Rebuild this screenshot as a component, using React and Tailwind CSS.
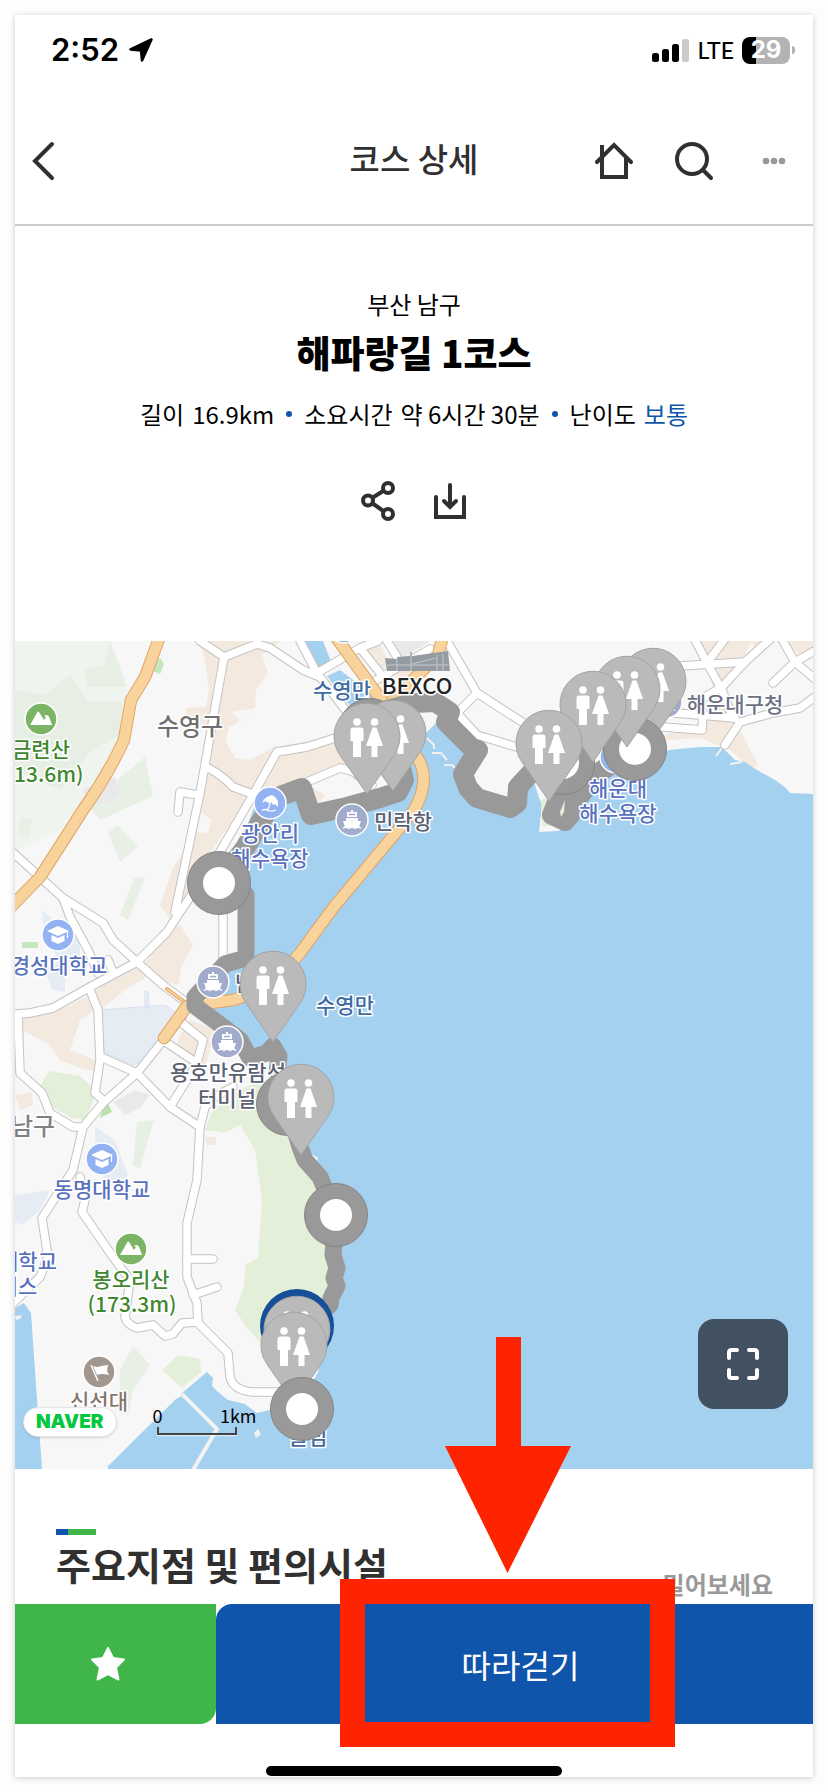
import { useState } from "react";

const roads = [
  "M200 641 L224 657 L257 644 L270 648 L303 670 L320 677 L347 712",
  "M224 657 L200 793 L175 912",
  "M208 768 Q222 775 233 787 L250 793",
  "M335 738 L307 747 L277 752 L250 800 L217 857 L180 912 L167 932 L137 962",
  "M198 795 L180 792 L178 812",
  "M10 850 L63 898 L103 923 L113 940 L137 962 L163 985 L187 1003",
  "M63 898 L70 917 L88 950 L98 973 M108 960 L113 972",
  "M137 962 L90 987 L53 1008 L30 1013 L15 1014",
  "M90 990 L98 1010 L100 1060 L95 1093 L103 1100",
  "M18 1014 L20 1073 L42 1093 L50 1113 L73 1127 L83 1127",
  "M182 1017 L137 1073 L103 1103 L83 1127 L73 1170 L42 1218 L48 1257 L40 1277 L10 1306",
  "M103 1058 L137 1073 L170 1107 L200 1127 L197 1180 L187 1223 L187 1277 L197 1303 L198 1323 L228 1353 L230 1377 Q233 1390 252 1392 L285 1392",
  "M198 1322 L182 1323 L173 1334 L165 1336 L153 1325 L137 1328 Q127 1325 125 1317 L130 1280 L113 1257 L82 1212 L85 1200 L80 1177",
  "M187 1259 L213 1259",
  "M193 1295 L217 1287",
  "M200 1127 L205 1107 L213 1098 L233 1087",
  "M170 1107 L193 1070",
  "M182 1023 L203 1040 L197 1063 L167 1043",
  "M223 905 L223 975",
  "M447 641 L477 693 L530 727",
  "M477 693 L457 713 L477 735 L520 748",
  "M300 641 L317 673 L360 648 L378 641",
  "M360 648 L380 673",
  "M373 682 L430 649",
  "M387 641 L399 660",
  "M300 785 L340 768 L352 771 L372 785",
  "M693 636 L707 663 L722 690 L733 718",
  "M727 636 L707 663",
  "M680 666 L745 662 L778 632",
  "M745 662 L722 687 L700 700",
  "M780 636 L795 662 L816 680",
  "M773 683 L795 662 L816 650",
  "M816 696 L800 708 L773 713 L740 722 L725 745",
  "M675 713 L735 718",
  "M703 712 L702 730 L663 727",
];

const highways = [
  "M160 636 L145 677 L131 700 L124 740 Q108 775 83 810 L40 877 L10 908",
  "M335 636 L385 705 L417 757 Q432 780 413 812 L333 908 L300 953 L270 988 L233 1000 L187 1006 L164 1038",
  "M443 636 L438 655 L393 700",
];

const route =
  "M219 882 L245 848 L275 798 L302 788 L311 815 L347 807 L380 798 L398 792 L404 780 L395 745 L370 715 L413 703 L435 702 L450 712 L446 722 L472 748 L478 750 L463 774 L468 788 L477 798 L510 808 L517 803 L518 787 L530 774 L549 770 L568 770 L558 800 L552 815 L565 821 L570 815 L577 800 L595 775 L635 749";

const routeSouth =
  "M219 882 L246 895 L246 958 L225 964 L195 997 L195 1006 L222 1026 L240 1040 L250 1058 L267 1053 L273 1046 L279 1056 L277 1073 L287 1104 L300 1147 L305 1160 L320 1177 L336 1215 L333 1255 L337 1268 L334 1278 L337 1286 L331 1298 L330 1305 L297 1330";

const labels = [
  { text: "수영구", x: 190, y: 735, size: 24, color: "#6f6f6f" },
  { text: "금련산", x: 41, y: 757, color: "#3f8730" },
  { text: "(413.6m)", x: 39, y: 782, color: "#3f8730" },
  { text: "수영만", x: 342, y: 698, color: "#3f6ba3" },
  { text: "BEXCO", x: 417, y: 694, size: 22, color: "#222222" },
  { text: "광안리", x: 270, y: 841, color: "#5a72bd" },
  { text: "해수욕장", x: 270, y: 866, color: "#5a72bd" },
  { text: "민락항", x: 403, y: 829, color: "#5b6170" },
  { text: "해운대구청", x: 735, y: 712, color: "#6b7186" },
  { text: "해운대", x: 618, y: 796, color: "#5a72bd" },
  { text: "해수욕장", x: 618, y: 821, color: "#5a72bd" },
  { text: "경성대학교", x: 59, y: 973, color: "#5a72bd" },
  { text: "남천항", x: 264, y: 991, color: "#5b6170" },
  { text: "수영만", x: 345, y: 1013, color: "#3f6ba3" },
  { text: "용호만유람선", x: 228, y: 1080, color: "#5b6170" },
  { text: "터미널", x: 227, y: 1106, color: "#5b6170" },
  { text: "남구", x: 33, y: 1135, size: 24, color: "#808080" },
  { text: "동명대학교", x: 102, y: 1197, color: "#5a72bd" },
  { text: "대학교", x: 28, y: 1269, color: "#5a72bd" },
  { text: "퍼스", x: 18, y: 1294, color: "#5a72bd" },
  { text: "봉오리산", x: 131, y: 1287, color: "#3f8730" },
  { text: "(173.3m)", x: 132, y: 1312, color: "#3f8730" },
  { text: "신선대", x: 99, y: 1409, color: "#85766e" },
  { text: "굴섬", x: 308, y: 1444, color: "#46699a" },
];

function Poi({ x, y, type }) {
  const fills = {
    beach: "#93b2f2",
    school: "#93b2f2",
    port: "#a1abcb",
    mountain: "#7bb464",
    flag: "#a2978e",
  };
  return (
    <g transform={`translate(${x} ${y})`}>
      <circle r="16" fill={fills[type]} stroke="#fff" strokeWidth="1.5" />
      {type === "mountain" && <path d="M-11 6 L-3.5 -7 Q-3 -8 -2 -7 L3 1 L5 -2 L3 -3 Q7 -6 8.500 -1 L11 6 Z" fill="#fff" />}
      {type === "school" && (
        <g fill="#fff">
          <path d="M0 -9 L11 -4 L0 1 L-11 -4 Z" />
          <path d="M-6.500 0 L0 3 L6.500 0 V6 L0 9 L-6.500 6 Z" />
          <path d="M9.500 -4 V3" stroke="#fff" strokeWidth="1.200" />
        </g>
      )}
      {type === "port" && (
        <g fill="#fff">
          <path d="M-1 -10 H1 V-8 H5 V-3 H-5 V-8 H-1 Z" />
          <path d="M-6 -2 H6 V1 L9 1 L7 7 H-7 L-9 1 L-6 1 Z" />
          <path d="M-9 8.500 Q-6 6 -3 8.500 Q0 6 3 8.500 Q6 6 9 8.500" fill="none" stroke="#fff" strokeWidth="1.500" />
          <path d="M-3 -5.500 H3" stroke={fills.port} strokeWidth="1.500" />
        </g>
      )}
      {type === "beach" && (
        <g fill="#fff">
          <path d="M-8 0 Q-6 -6 2 -8 Q9 -5 8 4 L5 1 L3.500 2 L1 -1 L-2 0 L-4 -2 Z" />
          <path d="M1 -3 L-2 7 M-8 7.500 Q-5 5.500 -2 7.500 Q1 9 6 7" stroke="#fff" strokeWidth="1.300" fill="none" />
        </g>
      )}
      {type === "flag" && (
        <g fill="#fff">
          <path d="M-8 -7 L-1 9" stroke="#fff" strokeWidth="1.500" />
          <path d="M-6 -6 Q-1 -4 2 -6 L9 -7 L8 -1 L10 3 Q3 1 -2 3 Z" />
        </g>
      )}
    </g>
  );
}

function Stop({ x, y }) {
  return (
    <g>
      <circle cx={x} cy={y} r="31.500" fill="#999" stroke="#848484" />
      <circle cx={x} cy={y} r="16" fill="#fff" />
    </g>
  );
}

function RestroomPin({ x, y }) {
  return (
    <g transform={`translate(${x} ${y})`}>
      <path d="M0 57 L-27.500 17.500 A33 33 0 1 1 27.500 17.500 Z" fill="#bababa" stroke="#a3a3a3" />
      <g fill="#fff">
        <circle cx="-10" cy="-15" r="3.800" />
        <path d="M-14 -9.500 H-6 Q-3.500 -9.500 -3.500 -7 V4 H-6 V20 H-14 V4 H-16.500 V-7 Q-16.500 -9.500 -14 -9.500 Z" />
        <circle cx="7.500" cy="-15" r="3.800" />
        <path d="M5.500 -9.500 H9.500 L16 9 H10.500 V20 H4.500 V9 H-1 Z" />
      </g>
    </g>
  );
}

function CourseMap() {
  return (
    <svg
      viewBox="15 641 798 828"
      className="block h-auto w-full"
      role="img"
      aria-label="해파랑길 1코스 지도"
      fontFamily='"Noto Sans CJK KR", sans-serif'
    >
      <rect x="15" y="641" width="798" height="828" fill="#f7f7f7" />

      {/* parks and hills */}
      <path d="M15 641 H110 L122 686 L128 690 L120 750 L60 830 L15 850 Z" fill="#f0f4ee" />
      <path d="M15 690 L45 695 L70 675 L88 702 H122 L120 735 L88 753 L75 775 L60 790 L15 770 Z" fill="#e7efe4" />
      <path d="M111 642 L127 687 H88 L84 670 L103 665 Z M145 757 L153 796 L100 820 L88 805 Z M20 817 L32 820 L28 839 L18 836 Z M117 825 L138 846 L120 862 L108 833 Z M134 878 L145 877 L128 920 L120 915 Z M137 1122 L154 1120 L140 1168 L133 1166 Z M120 1370 L133 1346 L150 1365 L133 1390 L128 1415 L119 1412 Z" fill="#e8efe5" />
      <path d="M155 662 L160 658 L164 664 L160 674 L153 671 Z M22 942 H38 V948 H22 Z" fill="#c3e6bb" />
      <path d="M49 1071 L80 1076 L97 1092 L85 1120 L72 1118 L40 1100 L38 1090 Z M162 1370 L178 1355 L200 1359 L201 1372 L182 1388 Z" fill="#e4efd9" />
      <path d="M103 1108 L108 1103 L112 1112 L100 1118 Z" fill="#b9e0ad" />
      <path d="M262 1080 L240 1090 L213 1110 L205 1130 L225 1133 L240 1125 L255 1150 L262 1200 L258 1257 L246 1265 L243 1290 L235 1310 L245 1325 L262 1345 H320 L334 1310 L333 1200 L305 1160 L287 1090 Z" fill="#e4efd9" />

      {/* built-up areas */}
      <g fill="#f3e9df">
        <path d="M200 641 H280 L262 655 L268 672 L256 690 L255 708 L232 712 L240 720 L228 730 L226 742 L235 758 L250 760 L278 745 L270 780 L240 810 L205 860 L175 925 L160 905 L172 870 L196 832 L208 833 L211 820 L196 808 L200 770 L210 730 L186 718 V708 L206 707 L209 690 L205 660 Z" />
        <path d="M160 930 L180 925 L193 945 L182 965 L178 985 L160 980 L145 965 Z" />
        <path d="M85 1000 L115 975 L140 965 L150 975 L125 990 L98 1012 Z" />
        <path d="M18 1020 L60 1010 L90 995 L95 1010 L80 1020 L70 1050 L95 1060 L98 1072 L80 1068 L60 1060 L50 1045 L22 1030 Z" />
        <path d="M190 1020 L215 1030 L205 1070 L175 1050 L180 1035 Z M15 1095 L32 1092 L33 1105 L20 1110 Z M205 1137 H216 V1145 H207 Z" />
        <path d="M272 748 L335 735 L345 765 L300 780 L325 795 L315 808 L300 780 L262 790 Z" />
        <path d="M366 650 L380 643 L390 665 L378 672 Z M385 675 L440 650 L420 680 Z" />
        <path d="M700 641 H752 L722 700 L735 720 L758 765 L750 768 L730 750 L700 738 L640 742 L665 735 L700 725 L715 695 Z M752 641 H773 L755 655 Z M785 641 H813 V648 L800 655 Z" />
      </g>
      <path d="M240 722 L252 716 L245 730 L226 728 Z" fill="#f7f7f7" />

      {/* campuses */}
      <path d="M100 1010 L165 1005 L182 1017 L145 1060 L133 1065 L103 1052 Z M145 991 L148 992 L149 1008 L145 1008 Z" fill="#e5ecf3" stroke="#d8e1ed" />
      <path d="M42 910 L60 925 L80 940 L80 960 L65 965 L65 992 L52 990 L45 970 L60 960 L45 940 Z M95 1127 L115 1140 L128 1175 L118 1190 L95 1170 Z M15 1195 L50 1190 L40 1210 L22 1225 L15 1222 Z" fill="#e5ecf3" />
      <path d="M113 1102 L135 1090 L150 1095 L140 1108 L125 1115 Z M82 790 L115 777 L120 792 L110 802 L90 805 Z M385 641 H430 L400 660 Z" fill="#e9e9ea" />

      {/* sea */}
      <path
        d="M813 794 L790 793 L786 788 L775 780 L757 770 L745 762 L735 760 L728 753 L721 747 L700 747 L669 750 L640 760 L605 775 L592 790 L585 808 L574 824 L558 831 L539 832 L542 805 L538 795 L535 785 L527 775 L518 787 L517 803 L510 810 L473 797 L462 773 L478 750 L470 748 L437 722 L425 734 L410 715 L375 695 L353 680 L340 670 L327 676 L345 700 L390 750 L400 775 L398 793 L347 807 L310 817 L301 788 L278 795 L255 805 L240 845 L247 880 L247 958 L225 965 L197 997 L195 1005 L240 1040 L255 1056 L268 1040 L275 1045 L281 1060 L290 1104 L305 1150 L318 1158 L314 1170 L337 1200 L336 1290 L332 1312 L318 1372 L300 1405 L282 1412 L270 1410 L257 1413 L245 1404 L228 1400 L218 1392 L212 1386 L213 1378 L207 1372 L182 1393 L180 1397 L176 1399 L108 1466 V1469 H813 Z"
        fill="#a5d1f0"
      />
      <path d="M305 641 H323 L333 667 L319 672 Z M15 1308 L24 1303 L31 1313 L36 1385 L42 1469 H15 Z" fill="#a5d1f0" />
      <path d="M182 1394 L217 1429 L193 1470" fill="none" stroke="#f2f2f0" strokeWidth="4" />
      <path d="M427 738 L434 745 L434 749 M432 753 H441 L447 760 M444 765 H452 L457 770 M716 756 L722 748 M730 764 L742 762" fill="none" stroke="#f0f0ee" strokeWidth="2" />
      <path d="M254 1433 L258 1429 L261 1434 L256 1438 Z M15 1316 L22 1315 L20 1319 L16 1320 Z" fill="#f2f2f0" />
      <path d="M541 800 L550 797 L550 826 L542 826 Z" fill="#e4efd9" />

      {/* roads */}
      <g fill="none" strokeLinejoin="round" strokeLinecap="round">
        {roads.map((d) => (
          <path key={d} d={d} stroke="#c3c3c3" strokeWidth="9.500" />
        ))}
        {roads.map((d) => (
          <path key={d} d={d} stroke="#fff" strokeWidth="7.500" />
        ))}
        <path d="M167 989 L190 1006" stroke="#dfa164" strokeWidth="4" />
        <path d="M167 989 L190 1006" stroke="#f8d39b" strokeWidth="2" />
        {highways.map((d) => (
          <path key={d} d={d} stroke="#e0a468" strokeWidth="12.500" />
        ))}
        {highways.map((d) => (
          <path key={d} d={d} stroke="#f8d39b" strokeWidth="10.500" />
        ))}
      </g>

      {/* course line */}
      <g fill="none" stroke="#999" strokeWidth="20" strokeLinejoin="round" strokeLinecap="round">
        <path d={route} />
        <path d={routeSouth} strokeWidth="17" />
      </g>
      <path d="M560 812 L565 800 L564 812 L561 817 Z" fill="#e4efd9" />

      {/* convention center */}
      <path d="M385 658 L397 659 V657 L410 656 V652 H412 V656 L448 651 L450 671 H387 Z" fill="#949ba3" />
      <path d="M387 665 H448 M397 659 V671 M411 652 V671 M437 655 V671 M443 654 V671 M412 664 L436 658" stroke="#c5c9cd" strokeWidth="1" fill="none" />

      <Poi x={41} y={719} type="mountain" />
      <Poi x={131} y={1249} type="mountain" />
      <Poi x={270} y={803} type="beach" />
      <Poi x={616} y={757} type="beach" />
      <Poi x={344} y={627} type="school" />
      <Poi x={58} y={935} type="school" />
      <Poi x={102} y={1159} type="school" />
      <Poi x={352} y={820} type="port" />
      <Poi x={213} y={982} type="port" />
      <Poi x={227} y={1042} type="port" />
      <Poi x={666} y={702} type="port" />
      <Poi x={99} y={1372} type="flag" />

      <g textAnchor="middle" fontWeight="500" stroke="#fff" strokeWidth="3" strokeLinejoin="round" paintOrder="stroke">
        {labels.map((l) => (
          <text key={`${l.text}-${l.y}`} x={l.x} y={l.y} fontSize={l.size || 21} fill={l.color}>
            {l.text}
          </text>
        ))}
      </g>

      {/* stops and restrooms, back to front */}
      <Stop x={370} y={730} />
      <RestroomPin x={393} y={734} />
      <RestroomPin x={367} y={737} />
      <RestroomPin x={653} y={682} />
      <Stop x={635} y={749} />
      <RestroomPin x={627} y={690} />
      <Stop x={563} y={763} />
      <RestroomPin x={593} y={705} />
      <RestroomPin x={549} y={744} />
      <Stop x={219} y={883} />
      <RestroomPin x={273} y={985} />
      <Stop x={288} y={1104} />
      <RestroomPin x={301} y={1098} />
      <Stop x={336} y={1215} />
      <circle cx="297" cy="1326" r="37" fill="#154f98" />
      <RestroomPin x={297} y={1330} />
      <RestroomPin x={294} y={1346} />
      <Stop x={302} y={1409} />
    </svg>
  );
}

function StatusBar() {
  return (
    <div className="flex h-[70px] items-center justify-between pr-[18px] pl-9 text-black">
      <div className="flex items-center gap-2.5">
        <span className="font-[Inter,sans-serif] text-[31px] leading-8 font-semibold">2:52</span>
        <svg viewBox="0 0 24 24" className="size-6">
          <path d="M22.500 1.500 L13 22.500 L12 12.500 L1.500 11.500 Z" fill="#000" stroke="#000" strokeWidth="2.500" strokeLinejoin="round" />
        </svg>
      </div>
      <div className="flex items-center gap-2">
        <svg viewBox="0 0 37 23" className="h-[23px] w-[37px]">
          <rect x="0" y="14" width="7" height="9" rx="2.500" />
          <rect x="10" y="10" width="7" height="13" rx="2.500" />
          <rect x="20" y="5" width="7" height="18" rx="2.500" />
          <rect x="30" y="0" width="7" height="23" rx="2.500" fill="#cbcbcb" />
        </svg>
        <span className="font-[Lato,sans-serif] text-[23px] leading-7 font-medium">LTE</span>
        <div className="flex items-center gap-0.5">
          <div className="flex h-[27px] w-12 items-center justify-center rounded-lg bg-linear-to-r from-black from-30% to-[#b3b3b3] to-30% font-[Inter,sans-serif] text-2xl font-bold text-white">
            29
          </div>
          <div className="h-2 w-[3px] rounded-r-full bg-[#b3b3b3]" />
        </div>
      </div>
    </div>
  );
}

function Header() {
  return (
    <header className="grid h-[141px] grid-cols-[1fr_auto_1fr] items-center border-b-2 border-[#cbcbcb] px-4 pt-3 text-[#303030]">
      <button type="button" aria-label="뒤로" className="justify-self-start">
        <svg viewBox="0 0 24 40" className="h-10 w-6" fill="none" stroke="currentColor" strokeWidth="4" strokeLinecap="round">
          <path d="M21 3 L4 20 L21 37" strokeLinejoin="miter" />
        </svg>
      </button>
      <h1 className="pb-1.5 text-[33px] leading-10 font-medium">코스 상세</h1>
      <div className="flex items-center gap-10 justify-self-end pr-[11px]">
        <button type="button" aria-label="홈">
          <svg viewBox="0 0 40 40" className="size-10" fill="none" stroke="currentColor" strokeWidth="4" strokeLinecap="round">
            <path d="M3 21 L20 4 L37 21" />
            <path d="M8 17 V36 H32 V17 M8 4 V17" strokeLinecap="butt" />
          </svg>
        </button>
        <button type="button" aria-label="검색">
          <svg viewBox="0 0 40 40" className="size-10" fill="none" stroke="currentColor" strokeWidth="4" strokeLinecap="round">
            <circle cx="18" cy="18" r="15" />
            <path d="M29 29 L37 37" />
          </svg>
        </button>
        <button type="button" aria-label="더보기" className="pl-2">
          <svg viewBox="0 0 24 8" className="h-2 w-6" fill="#999">
            <circle cx="4" cy="4" r="3.300" />
            <circle cx="12" cy="4" r="3.300" />
            <circle cx="20" cy="4" r="3.300" />
          </svg>
        </button>
      </div>
    </header>
  );
}

export default function App() {
  const [liked, setLiked] = useState(false);

  return (
    <div className="min-h-screen bg-[#fdfdfd] p-[15px] font-['Noto_Sans_CJK_KR',sans-serif]">
      <div className="overflow-hidden bg-white shadow-[0_1px_6px_rgba(0,0,0,0.2)]">
        <StatusBar />
        <Header />

        <main>
          {/* Course summary */}
          <section className="flex flex-col items-center pt-[62px] pb-[120px] text-black">
            <p className="text-2xl leading-8">부산 남구</p>
            <h2 className="mt-2 text-[37px] leading-[48px] font-black">해파랑길 1코스</h2>
            <p className="mt-[22px] flex items-center gap-3 text-2xl leading-8">
              <span className="flex gap-2">
                <span>길이</span>
                <span>16.9km</span>
              </span>
              <span className="size-1.5 rounded-full bg-[#0f55ac]" />
              <span className="flex gap-2">
                <span>소요시간</span>
                <span>약 6시간 30분</span>
              </span>
              <span className="size-1.5 rounded-full bg-[#0f55ac]" />
              <span className="flex gap-2">
                <span>난이도</span>
                <span className="text-[#0f55ac]">보통</span>
              </span>
            </p>
            <div className="mt-[51px] flex gap-8 text-[#303030]">
              <button type="button" aria-label="공유">
                <svg viewBox="0 0 40 40" className="size-10" fill="none" stroke="currentColor" strokeWidth="4">
                  <circle cx="10" cy="19.500" r="5" />
                  <circle cx="30" cy="7" r="5" />
                  <circle cx="30" cy="33" r="5" />
                  <path d="M14 17 L26 9.500 M14 22 L26 30.500" />
                </svg>
              </button>
              <button type="button" aria-label="다운로드">
                <svg viewBox="0 0 40 40" className="size-10" fill="none" stroke="currentColor" strokeWidth="4" strokeLinecap="round">
                  <path d="M6 16 V36 H34 V16" />
                  <path d="M20 4 V24 M14 20 L20 26 L26 20" />
                </svg>
              </button>
            </div>
          </section>

          {/* Map */}
          <section className="relative">
            <CourseMap />
            <div className="absolute bottom-8 left-2 flex items-end gap-9">
              <div className="rounded-full border border-gray-200 bg-white px-3 font-[Inter,sans-serif] text-[19px] leading-7 font-black text-[#03c73c] shadow-sm">
                NAVER
              </div>
              <div className="pb-0.5 text-lg leading-6 text-black">
                <div className="flex w-[104px] justify-between">
                  <span>0</span>
                  <span>1km</span>
                </div>
                <div className="ml-1 h-2 w-20 border-x-2 border-b-2 border-[#444] shadow-[0_1px_1px_rgba(255,255,255,0.6)]" />
              </div>
            </div>
            <button
              type="button"
              aria-label="전체 화면"
              className="absolute right-[25px] bottom-[60px] flex size-[90px] items-center justify-center rounded-2xl bg-[#415161]"
            >
              <svg viewBox="0 0 32 32" className="size-8" fill="none" stroke="#fff" strokeWidth="4" strokeLinecap="round">
                <path d="M2 10 V4.500 Q2 2 4.500 2 H10 M22 2 H27.500 Q30 2 30 4.500 V10 M30 22 V27.500 Q30 30 27.500 30 H22 M10 30 H4.500 Q2 30 2 27.500 V22" />
              </svg>
            </button>
          </section>

          {/* Points of interest */}
          <section className="flex items-end justify-between pt-[60px] pr-10 pb-1.5 pl-[41px]">
            <div className="mb-3">
              <div className="flex h-1.5 w-10">
                <span className="w-3 bg-[#0f55ac]" />
                <span className="flex-1 bg-[#3fb54a]" />
              </div>
              <h3 className="mt-[7px] text-[38px] leading-[44px] font-bold text-[#303030]">주요지점 및 편의시설</h3>
            </div>
            <p className="text-2xl leading-7 font-bold text-[#999]">밀어보세요</p>
          </section>
        </main>

        <div className="flex h-[120px]">
          <button
            type="button"
            aria-label="즐겨찾기"
            aria-pressed={liked}
            onClick={() => setLiked(!liked)}
            className="flex w-[201px] items-center justify-center rounded-br-2xl bg-[#3fb54a] pr-4"
          >
            <svg viewBox="0 0 36 36" className="size-9">
              <path d="M18 2 L23 12 L34 13.500 L26 21.500 L28.500 33.500 L18 28 L7.500 33.500 L10 21.500 L2 13.500 L13 12 Z" fill="#fff" stroke="#fff" strokeWidth="2" strokeLinejoin="round" />
            </svg>
          </button>
          <div className="relative flex-1">
            <button type="button" className="h-full w-full rounded-tl-2xl bg-[#0f55ac] pl-3 text-[32px] leading-10 text-white">
              따라걷기
            </button>
            {/* Callout */}
            <div className="pointer-events-none absolute -bottom-[23px] left-[124px] flex w-[335px] flex-col items-center gap-1.5">
              <svg viewBox="0 0 126 236" className="h-[236px] w-[126px]" fill="#ff2400">
                <path d="M51 0 H76 V109 H126 L62.500 236 L0 109 H51 Z" />
              </svg>
              <div className="h-[168px] w-full border-[25px] border-[#ff2400]" />
            </div>
          </div>
        </div>
        <div className="mx-auto mt-[42px] mb-px h-2.5 w-[296px] rounded-full bg-black" />
      </div>
    </div>
  );
}
